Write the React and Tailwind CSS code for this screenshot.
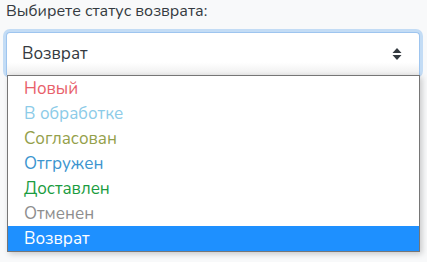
const statuses = [
  { label: "Новый", color: "text-[#e8606a]" },
  { label: "В обработке", color: "text-[#8ccbe8]" },
  { label: "Согласован", color: "text-[#94a04a]" },
  { label: "Отгружен", color: "text-[#3c95cf]" },
  { label: "Доставлен", color: "text-[#1a9c40]" },
  { label: "Отменен", color: "text-[#8e8e8e]" },
];

export default function App() {
  return (
    <div className="w-[427px] h-[262px] bg-[#f8f9fa] overflow-hidden font-['Nunito','Noto_Sans',sans-serif] text-[17px]">
      <div className="px-[6px] pt-[1px] h-[29px] leading-[20px] text-[16px] text-[#343a40]">
        Выбирете статус возврата:
      </div>
      <div className="mx-[3px] rounded-[7px] p-[3px] bg-[#c3dcf5] w-[420px]">
        <div className="h-[43px] bg-white rounded-t-[4px] border border-[#9ec5ef] border-b-0 flex items-center pl-[15px] pr-[17px] text-[#343a40] bg-gradient-to-b from-white from-70% to-[#eeeeee]">
          <span className="flex-1">Возврат</span>
          <svg width="10" height="14" viewBox="0 0 10 14">
            <path d="M5 1 L9.5 6 L0.5 6 Z" fill="#343a40" />
            <path d="M0.5 8 L9.5 8 L5 13 Z" fill="#343a40" />
          </svg>
        </div>
      </div>
      <div className="relative -mt-[3px] ml-[7px] w-[413px] bg-white border border-[#767676] shadow-[2px_2px_6px_rgba(0,0,0,0.2)]">
        {statuses.map((s) => (
          <div key={s.label} className={`h-[25px] leading-[25px] pl-[16px] ${s.color}`}>
            {s.label}
          </div>
        ))}
        <div className="h-[25px] leading-[25px] pl-[16px] bg-[#1e90ff] text-white">Возврат</div>
      </div>
    </div>
  );
}
